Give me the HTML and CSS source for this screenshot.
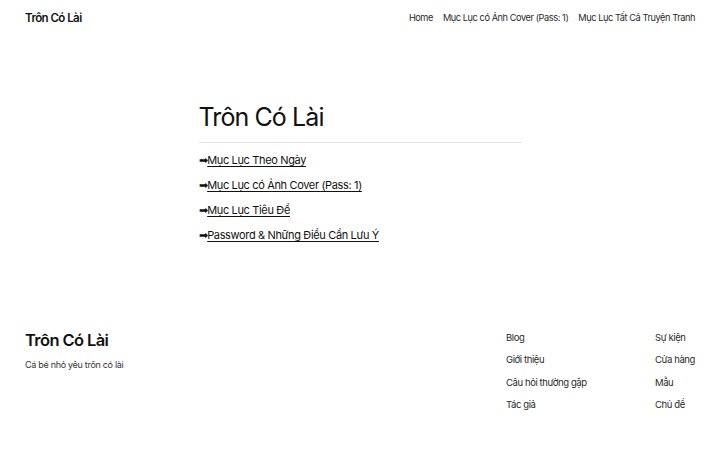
FILE: index.html
```html
<!DOCTYPE html>
<html lang="vi">
<head>
    <meta charset="UTF-8">
    <title>Trôn Có Lài</title>
    <link rel="stylesheet" href="styles.css">
</head>
<body>
    <header class="site-header">
        <a class="site-title" href="#">Trôn Có Lài</a>
        <nav class="site-nav">
            <a href="#">Home</a>
            <a href="#">Mục Lục có Ảnh Cover (Pass: 1)</a>
            <a href="#">Mục Lục Tất Cả Truyện Tranh</a>
        </nav>
    </header>

    <main class="content">
        <h1 class="page-title">Trôn Có Lài</h1>
        <hr class="sep">
        <ul class="toc">
            <li>➡<a href="#">Mục Lục Theo Ngày</a></li>
            <li>➡<a href="#">Mục Lục có Ảnh Cover (Pass: 1)</a></li>
            <li>➡<a href="#">Mục Lục Tiêu Đề</a></li>
            <li>➡<a href="#">Password &amp; Những Điều Cần Lưu Ý</a></li>
        </ul>
    </main>

    <footer class="site-footer">
        <div class="brand">
            <a class="footer-title" href="#">Trôn Có Lài</a>
            <p class="tagline">Cá bé nhỏ yêu trôn có lài</p>
        </div>
        <div class="footer-links">
            <ul>
                <li><a href="#">Blog</a></li>
                <li><a href="#">Giới thiệu</a></li>
                <li><a href="#">Câu hỏi thường gặp</a></li>
                <li><a href="#">Tác giả</a></li>
            </ul>
            <ul>
                <li><a href="#">Sự kiện</a></li>
                <li><a href="#">Cửa hàng</a></li>
                <li><a href="#">Mẫu</a></li>
                <li><a href="#">Chủ đề</a></li>
            </ul>
        </div>
    </footer>
</body>
</html>
```

FILE: styles.css
```css
body {
    margin: 0;
    background: #fff;
    color: #111;
    font-family: Inter, "Noto Sans", sans-serif;
}
a {
    color: inherit;
    text-decoration: none;
}
ul {
    list-style: none;
    margin: 0;
    padding: 0;
}

/* header */
.site-header {
    display: flex;
    justify-content: space-between;
    align-items: center;
    padding: 9px 25px 0;
    height: 17px;
}
.site-title {
    font-size: 11.5px;
    font-weight: 600;
    letter-spacing: -0.55px;
}
.site-nav {
    display: flex;
    gap: 10px;
    font-size: 9.2px;
    letter-spacing: -0.42px;
    color: #2a2a2a;
}

/* main content */
.content {
    width: 323px;
    margin: 0 auto;
    padding-top: 74px;
    padding-bottom: 79px;
}
.page-title {
    margin: 0;
    font-size: 25px;
    font-weight: 400;
    line-height: 35px;
    letter-spacing: -0.9px;
}
.sep {
    border: 0;
    border-top: 1px solid #e3e3e3;
    margin: 7px 0 5px;
}
.toc li {
    font-size: 11px;
    line-height: 25px;
    letter-spacing: -0.35px;
}
.toc a {
    text-decoration: underline;
    text-underline-offset: 2px;
    text-decoration-thickness: 1px;
}

/* footer */
.site-footer {
    display: flex;
    justify-content: space-between;
    padding: 0 25px;
}
.brand {
    padding-top: 1px;
}
.footer-title {
    display: block;
    font-size: 16.5px;
    font-weight: 600;
    letter-spacing: -0.6px;
    line-height: 24px;
}
.tagline {
    margin: 7px 0 0;
    font-size: 9px;
    color: #333;
    letter-spacing: -0.3px;
}
.footer-links {
    display: flex;
}
.footer-links ul {
    width: 149px;
    white-space: nowrap;
}
.footer-links ul:last-child {
    width: auto;
}
.footer-links li {
    font-size: 9.5px;
    line-height: 22.3px;
    letter-spacing: -0.4px;
    color: #2a2a2a;
}
```
